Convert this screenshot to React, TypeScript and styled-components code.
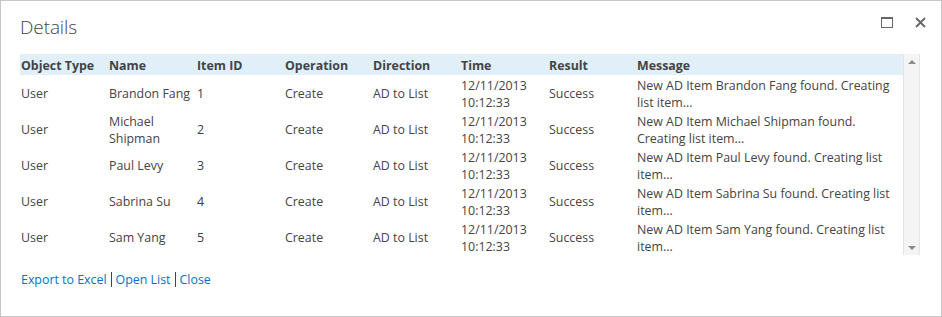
import React from 'react'
import styled, { createGlobalStyle } from 'styled-components'

const GlobalStyle = createGlobalStyle`
  html, body {
    margin: 0;
    padding: 0;
    background: #ffffff;
  }
  body {
    font-family: "Open Sans", "Noto Sans", "Liberation Sans", sans-serif;
    color: #444444;
  }
`

const Dialog = styled.div`
  box-sizing: border-box;
  width: 942px;
  height: 317px;
  border: 1px solid #c6c6c6;
  background: #ffffff;
  padding: 0 21px 0 19px;
  display: flex;
  flex-direction: column;
`

const TitleBar = styled.div`
  display: flex;
  align-items: center;
  justify-content: space-between;
  height: 53px;
`

const Title = styled.h1`
  margin: 0 0 1px 0;
  font-size: 19px;
  font-weight: 300;
  color: #444444;
  letter-spacing: -0.1px;
`

const WindowButtons = styled.div`
  display: flex;
  align-items: center;
  gap: 22px;
  margin: -10px -6px 0 0;
`

const IconButton = styled.button`
  border: none;
  background: none;
  padding: 0;
  height: 12px;
  display: flex;
  align-items: center;
  justify-content: center;
  cursor: pointer;
`

const Grid = styled.div`
  display: flex;
  height: 201px;
`

const TableWrap = styled.div`
  flex: 1;
`

const Table = styled.table`
  width: 100%;
  border-collapse: collapse;
  table-layout: fixed;
  font-size: 12.4px;
`

const HeadCell = styled.th`
  box-sizing: border-box;
  height: 21px;
  padding: 2px 0 0 1px;
  text-align: left;
  font-weight: 700;
  background: #e1eff9;
  color: #444444;
  white-space: nowrap;
  line-height: 19px;
`

const Cell = styled.td<{ $id?: boolean }>`
  box-sizing: border-box;
  height: 36px;
  padding: 1px 4px 0 1px;
  vertical-align: middle;
  line-height: 17px;
  color: ${({ $id }) => ($id ? '#2f3b55' : '#444444')};
`

const Scrollbar = styled.div`
  box-sizing: border-box;
  width: 17px;
  background: #f4f4f4;
  border-left: 1px solid #e4e4e4;
  border-right: 1px solid #e4e4e4;
  display: flex;
  flex-direction: column;
  justify-content: space-between;
  align-items: center;
  padding: 6px 0 5px;
`

const Arrow = styled.div<{ $down?: boolean }>`
  width: 0;
  height: 0;
  border-left: 4px solid transparent;
  border-right: 4px solid transparent;
  ${({ $down }) =>
    $down ? 'border-top: 4px solid #8a8a8a;' : 'border-bottom: 4px solid #8a8a8a;'}
`

const Footer = styled.div`
  display: flex;
  align-items: center;
  margin-top: 16px;
  padding-left: 1px;
  font-size: 12.4px;
`

const FooterLink = styled.a`
  color: #0072c6;
  text-decoration: none;
  cursor: pointer;
`

const Sep = styled.span`
  display: inline-block;
  width: 1px;
  height: 15px;
  background: #444444;
  margin: 0 4px 0 4px;
`

const columns = ['Object Type', 'Name', 'Item ID', 'Operation', 'Direction', 'Time', 'Result', 'Message']
const names = ['Brandon Fang', 'Michael Shipman', 'Paul Levy', 'Sabrina Su', 'Sam Yang']

export default function App() {
  return (
    <>
      <GlobalStyle />
      <Dialog>
        <TitleBar>
          <Title>Details</Title>
          <WindowButtons>
            <IconButton aria-label="Maximize">
              <svg width="12" height="11" viewBox="0 0 12 11">
                <rect x="0.5" y="0.5" width="11" height="10" fill="none" stroke="#666" />
                <rect x="0" y="0" width="12" height="2" fill="#666" />
              </svg>
            </IconButton>
            <IconButton aria-label="Close">
              <svg width="11" height="11" viewBox="0 0 11 11">
                <path d="M1 1 L10 10 M10 1 L1 10" stroke="#666" strokeWidth="1.8" />
              </svg>
            </IconButton>
          </WindowButtons>
        </TitleBar>
        <Grid>
          <TableWrap>
            <Table>
              <colgroup>
                {columns.map((c, i) => (
                  <col key={c} style={{ width: i < 7 ? 88 : undefined }} />
                ))}
              </colgroup>
              <thead>
                <tr>
                  {columns.map((c) => (
                    <HeadCell key={c}>{c}</HeadCell>
                  ))}
                </tr>
              </thead>
              <tbody>
                {names.map((n, i) => (
                  <tr key={n}>
                    <Cell>User</Cell>
                    <Cell>{n}</Cell>
                    <Cell $id>{i + 1}</Cell>
                    <Cell>Create</Cell>
                    <Cell>AD to List</Cell>
                    <Cell>12/11/2013 10:12:33</Cell>
                    <Cell>Success</Cell>
                    <Cell>{`New AD Item ${n} found. Creating list item...`}</Cell>
                  </tr>
                ))}
              </tbody>
            </Table>
          </TableWrap>
          <Scrollbar>
            <Arrow />
            <Arrow $down />
          </Scrollbar>
        </Grid>
        <Footer>
          <FooterLink>Export to Excel</FooterLink>
          <Sep />
          <FooterLink>Open List</FooterLink>
          <Sep />
          <FooterLink>Close</FooterLink>
        </Footer>
      </Dialog>
    </>
  )
}
